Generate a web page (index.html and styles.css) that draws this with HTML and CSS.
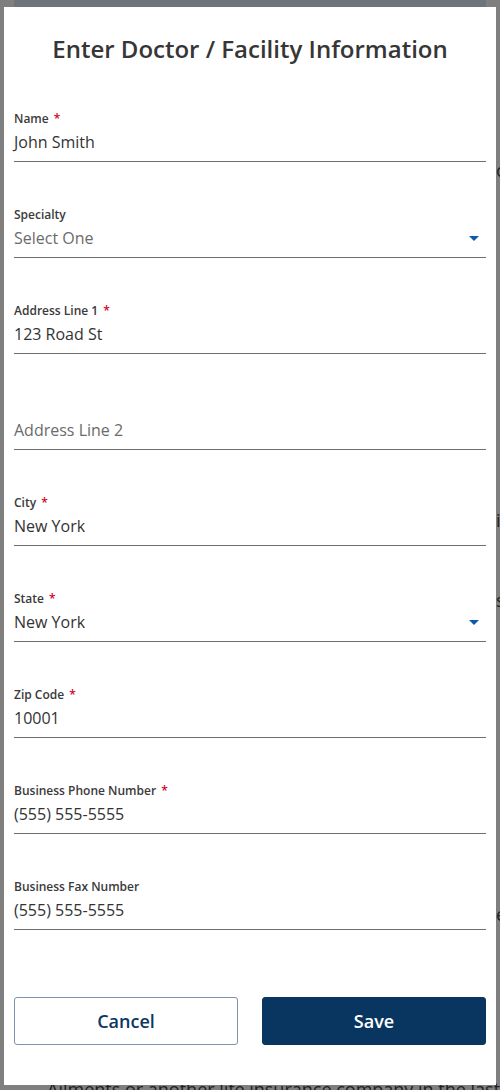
FILE: index.html
```html
<!DOCTYPE html>
<html lang="en">
<head>
<meta charset="utf-8">
<title>Enter Doctor / Facility Information</title>
<link rel="stylesheet" href="styles.css">
</head>
<body>
<div class="page" aria-hidden="true">
  <div class="page-head"></div>
  <div class="page-body">
    <p class="bg-line peek l1">of</p>
    <p class="bg-line peek l2">is</p>
    <p class="bg-line peek l3">so</p>
    <p class="bg-line peek l4">ea</p>
    <p class="bg-line last">Ailments or another life insurance company in the last</p>
  </div>
</div>
<div class="overlay"></div>
<div class="modal" role="dialog" aria-labelledby="modal-title">
  <h1 class="title" id="modal-title">Enter Doctor / Facility Information</h1>
  <form class="form">
    <div class="field">
      <div class="label">Name <span class="req">*</span></div>
      <div class="value">John Smith</div>
    </div>
    <div class="field">
      <div class="label">Specialty</div>
      <div class="value select placeholder">Select One<span class="caret"></span></div>
    </div>
    <div class="field">
      <div class="label">Address Line 1 <span class="req">*</span></div>
      <div class="value">123 Road St</div>
    </div>
    <div class="field">
      <div class="label"></div>
      <div class="value placeholder">Address Line 2</div>
    </div>
    <div class="field">
      <div class="label">City <span class="req">*</span></div>
      <div class="value">New York</div>
    </div>
    <div class="field">
      <div class="label">State <span class="req">*</span></div>
      <div class="value select">New York<span class="caret"></span></div>
    </div>
    <div class="field">
      <div class="label">Zip Code <span class="req">*</span></div>
      <div class="value">10001</div>
    </div>
    <div class="field">
      <div class="label">Business Phone Number <span class="req">*</span></div>
      <div class="value">(555) 555-5555</div>
    </div>
    <div class="field">
      <div class="label">Business Fax Number</div>
      <div class="value">(555) 555-5555</div>
    </div>
    <div class="actions">
      <button type="button" class="btn btn-cancel">Cancel</button>
      <button type="button" class="btn btn-save">Save</button>
    </div>
  </form>
</div>
</body>
</html>
```

FILE: styles.css
```css
html, body {
  margin: 0;
  padding: 0;
}

body {
  width: 500px;
  height: 1090px;
  overflow: hidden;
  background: #ffffff;
  font-family: "Open Sans", "Liberation Sans", sans-serif;
}

.page {
  padding: 0 14px;
}

.page-head {
  height: 60px;
  background: #dee8f8;
}

.page-body {
  white-space: nowrap;
  font-size: 18px;
  color: #444;
}

.bg-line {
  margin: 0;
  line-height: 24px;
}

.peek {
  padding-left: 482px;
}

.l1 { margin-top: 98px; }
.l2 { margin-top: 326px; }
.l3 { margin-top: 56px; }
.l4 { margin-top: 290px; }
.last { margin-top: 151px; padding-left: 33px; }

.overlay {
  position: fixed;
  inset: 0;
  background: rgba(0, 0, 0, 0.5);
}

.modal {
  position: fixed;
  top: 7px;
  left: 4px;
  width: 492px;
  height: 1078px;
  box-sizing: border-box;
  padding: 0 10px;
  background: #ffffff;
  color: #333333;
}

.title {
  margin: 26px 0 46px;
  font-size: 24px;
  line-height: 32px;
  font-weight: 600;
  text-align: center;
  color: #363636;
}

.form {
  display: flex;
  flex-direction: column;
  gap: 45px;
}

.field {
  border-bottom: 1px solid #6f6f6f;
}

.label {
  height: 16px;
  font-size: 12px;
  line-height: 16px;
  font-weight: 600;
  color: #3a3a3a;
}

.req {
  color: #d0021b;
  margin-left: 2px;
}

.value {
  padding: 3px 0 7px;
  font-size: 16px;
  line-height: 24px;
  color: #333333;
}

.value.placeholder {
  color: #6b6b6b;
}

.select {
  display: flex;
  align-items: center;
  justify-content: space-between;
  padding-right: 7px;
}

.caret {
  width: 0;
  height: 0;
  border-left: 5px solid transparent;
  border-right: 5px solid transparent;
  border-top: 5px solid #0d5aa6;
}

.actions {
  display: flex;
  gap: 24px;
  margin-top: 22px;
}

.btn {
  flex: 1;
  height: 48px;
  border-radius: 3px;
  font-family: "Open Sans", "Liberation Sans", sans-serif;
  font-size: 18px;
  font-weight: 600;
  cursor: pointer;
}

.btn-cancel {
  background: #ffffff;
  border: 1px solid #7d93ab;
  color: #0b3761;
}

.btn-save {
  background: #083660;
  border: 1px solid #083660;
  color: #ffffff;
}
```
